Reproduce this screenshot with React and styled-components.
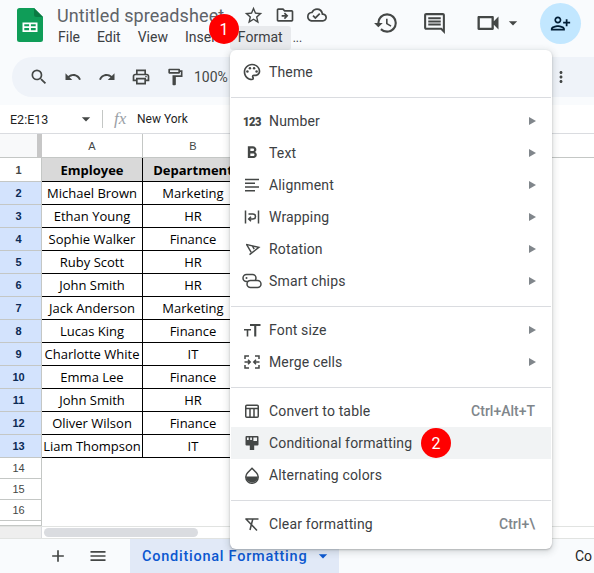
import React from 'react';
import styled, { createGlobalStyle } from 'styled-components';
import {
  MdStarBorder, MdOutlineDriveFileMove, MdOutlineCloudDone, MdHistory, MdOutlineComment,
  MdOutlineVideocam, MdArrowDropDown, MdPersonAddAlt, MdSearch, MdUndo, MdRedo, MdOutlinePrint,
  MdOutlineFormatPaint, MdMoreVert, MdOutlinePalette, MdFormatBold,
  MdAdd, MdMenu,
} from 'react-icons/md';

const GlobalStyle = createGlobalStyle`
  html, body {
    margin: 0;
    padding: 0;
    width: 594px;
    height: 573px;
    overflow: hidden;
    background: #fff;
    font-family: Roboto, "Liberation Sans", sans-serif;
  }
`;

const Page = styled.div`
  position: relative;
  width: 594px;
  height: 573px;
  overflow: hidden;
  display: flex;
  flex-direction: column;
  background: #f9fbfd;
`;

const Header = styled.header`
  display: flex;
  height: 57px;
  flex: none;
  color: #444746;
`;

const LogoSlot = styled.div`
  width: 50px;
  flex: none;
  padding: 8px 0 0 17px;
  box-sizing: border-box;
`;

const TitleColumn = styled.div`
  display: flex;
  flex-direction: column;
`;

const TitleRow = styled.div`
  display: flex;
  align-items: center;
  height: 26px;
  padding-left: 7px;
  padding-top: 2px;
  box-sizing: content-box;
  margin-bottom: -2px;
`;

const DocTitle = styled.div`
  font-size: 18px;
  letter-spacing: 0.1px;
  color: #5f6368;
  width: 180px;
  white-space: nowrap;
`;

const TitleIcon = styled.span`
  display: flex;
  justify-content: center;
  width: 32px;
  color: #444746;
`;

const MenuBar = styled.nav`
  display: flex;
  height: 24px;
  align-items: center;
  font-size: 14px;
  color: #3c4043;
`;

const MenuName = styled.div`
  height: 24px;
  line-height: 22px;
  padding: 0 8px;
  margin-right: 1px;
  border-radius: 3px;
  background: ${p => (p.$active ? '#e8eaed' : 'transparent')};
`;

const MoreDots = styled.div`
  margin-left: 1px;
  font-size: 12px;
  color: #3c4043;
`;

const HeaderActions = styled.div`
  margin-left: auto;
  display: flex;
  align-items: center;
  padding: 2px 13px 13px 0;
`;

const ActionIcon = styled.span`
  display: flex;
  justify-content: center;
  align-items: center;
  width: ${p => p.$w || 49}px;
  margin-left: ${p => p.$gap || 0}px;
  color: #444746;
`;

const Avatar = styled.div`
  width: 41px;
  height: 41px;
  border-radius: 50%;
  background: #c2e7ff;
  color: #001d35;
  display: flex;
  align-items: center;
  justify-content: center;
  margin-left: 16px;
`;

const Toolbar = styled.div`
  display: flex;
  align-items: center;
  height: 40px;
  flex: none;
  margin-left: 12px;
  padding: 0 24px 0 11px;
  gap: 2px;
  border-radius: 20px 0 0 20px;
  background: #eff3f9;
  color: #444746;
`;

const ToolButton = styled.span`
  width: 32px;
  height: 32px;
  display: flex;
  align-items: center;
  justify-content: center;
`;

const Zoom = styled.span`
  font-size: 14px;
  margin-left: 1px;
  color: #444746;
`;

const Kebab = styled.span`
  display: flex;
  margin-left: auto;
`;

const FormulaBar = styled.div`
  display: flex;
  align-items: center;
  height: 29px;
  flex: none;
  margin-top: 8px;
  background: #fff;
  border-bottom: 1px solid #dadce0;
  box-sizing: border-box;
  font-family: Roboto, sans-serif;
  font-size: 12px;
  color: #1f1f1f;
`;

const NameBox = styled.div`
  width: 102px;
  box-sizing: border-box;
  padding-left: 10px;
  display: flex;
  align-items: center;
  justify-content: space-between;
  padding-right: 6px;
  font-size: 12.5px;
`;

const Fx = styled.span`
  border-left: 1px solid #c4c7c5;
  height: 18px;
  line-height: 18px;
  padding-left: 11px;
  width: 22px;
  margin-right: 1px;
  font-family: "Liberation Serif", serif;
  font-style: italic;
  font-size: 17px;
  color: #9aa0a6;
`;

const Sheet = styled.div`
  flex: none;
  height: 392px;
  background: #fff;
  overflow: hidden;
`;

const SheetRow = styled.div`
  display: flex;
  height: ${p => p.$h}px;
`;

const Corner = styled.div`
  width: 42px;
  flex: none;
  box-sizing: border-box;
  background: #f8f9fa;
  border-right: 5px solid #c7c7c7;
  border-bottom: 1px solid #c4c7c5;
`;

const ColHead = styled.div`
  width: ${p => p.$w}px;
  flex: ${p => (p.$fill ? 1 : 'none')};
  box-sizing: border-box;
  display: flex;
  align-items: center;
  justify-content: center;
  font-family: "Liberation Sans", sans-serif;
  font-size: 11px;
  color: #444746;
  border-right: ${p => (p.$fill ? 0 : '1px solid #c4c7c5')};
  border-bottom: 1px solid #c4c7c5;
`;

const RowHead = styled.div`
  width: 42px;
  flex: none;
  box-sizing: border-box;
  display: flex;
  align-items: center;
  justify-content: center;
  padding-right: 4px;
  font-family: "Liberation Sans", sans-serif;
  font-size: 11px;
  font-weight: ${p => (p.$bold ? 700 : 400)};
  color: ${p => (p.$selected ? '#0b2a55' : '#444746')};
  background: ${p => (p.$selected ? '#d3e3fd' : '#fff')};
  border-right: 1px solid #c4c7c5;
  border-bottom: 1px solid #c4c7c5;
`;

const Cell = styled.div`
  width: ${p => p.$w}px;
  flex: none;
  box-sizing: border-box;
  display: flex;
  align-items: center;
  justify-content: center;
  white-space: nowrap;
  overflow: hidden;
  font-family: "Open Sans", sans-serif;
  font-size: 13px;
  font-weight: ${p => (p.$head ? 700 : 400)};
  background: ${p => (p.$head ? '#d9d9d9' : '#fff')};
  color: #000;
  border-right: 1px solid #000;
  border-bottom: 1px solid #000;
`;

const ScrollTrack = styled.div`
  display: flex;
  flex: none;
  height: 13px;
  background: #fff;
  border-top: 1px solid #e1e3e1;
  border-bottom: 1px solid #e1e3e1;
  box-sizing: border-box;
`;

const ScrollGutter = styled.div`
  width: 42px;
  flex: none;
  background: #eeeeee;
  border-right: 1px solid #dadce0;
  box-sizing: border-box;
`;

const ScrollThumb = styled.div`
  width: 154px;
  height: 9px;
  margin: 1px 0 0 2px;
  border-radius: 5px;
  background: #dadce0;
`;

const TabBar = styled.footer`
  display: flex;
  align-items: stretch;
  flex: 1;
  padding-left: 46px;
  color: #444746;
`;

const TabTool = styled.span`
  width: 24px;
  display: flex;
  align-items: center;
  justify-content: center;
  margin-right: 16px;
`;

const ActiveTab = styled.div`
  width: 209px;
  margin-left: 4px;
  box-sizing: border-box;
  padding-left: 12px;
  display: flex;
  align-items: center;
  background: #e1e9f7;
  color: #0b57d0;
  font-size: 14.5px;
  font-weight: 500;
  letter-spacing: 0.75px;
  white-space: nowrap;
`;

const TabCaret = styled.span`
  display: flex;
  margin-left: 6px;
`;

const NextTab = styled.div`
  margin-left: auto;
  width: 19px;
  overflow: hidden;
  display: flex;
  align-items: center;
  font-size: 14px;
  color: #1f1f1f;
`;

const Menu = styled.div`
  position: absolute;
  left: 230px;
  top: 50px;
  width: 322px;
  height: 499px;
  box-sizing: border-box;
  padding-top: 6px;
  background: #fff;
  border-radius: 6px;
  box-shadow: 0 2px 6px 2px rgba(60, 64, 67, 0.15), 0 1px 2px rgba(60, 64, 67, 0.3);
  font-size: 14px;
  letter-spacing: 0.15px;
  color: #3c4043;
`;

const MenuItem = styled.div`
  display: flex;
  align-items: center;
  height: 32px;
  padding: 0 16px 0 11px;
  margin: 0 1px;
  background: ${p => (p.$hover ? '#f1f3f4' : 'transparent')};
`;

const ItemIcon = styled.span`
  width: 20px;
  height: 20px;
  margin-right: 7px;
  flex: none;
  display: flex;
  align-items: center;
  justify-content: center;
  color: #444746;
`;

const NumberGlyph = styled.span`
  font-weight: 900;
  font-size: 13.5px;
  letter-spacing: -0.5px;
  transform: scaleX(0.82);
  color: #444746;
`;

const ItemEnd = styled.span`
  margin-left: auto;
  color: #80868b;
  font-weight: 500;
  letter-spacing: 0;
`;

const Arrow = styled.span`
  margin-left: auto;
  margin-right: -1px;
  width: 0;
  height: 0;
  border-left: 7px solid #80868b;
  border-top: 4px solid transparent;
  border-bottom: 4px solid transparent;
`;

const Divider = styled.div`
  height: 1px;
  margin: 9px 1px 7px;
  background: #dadce0;
`;

const Badge = styled.div`
  position: absolute;
  left: ${p => p.$x}px;
  top: ${p => p.$y}px;
  width: 30px;
  height: 30px;
  border-radius: 50%;
  background: #ff0000;
  color: #fff;
  font-size: 16px;
  display: flex;
  align-items: center;
  justify-content: center;
`;

const SheetsLogo = () => (
  <svg width="26" height="34" viewBox="0 0 26 34">
    <path d="M2.5 0H17l9 9v22.5a2.5 2.5 0 0 1-2.5 2.5h-21A2.5 2.5 0 0 1 0 31.500V2.500A2.500 2.500 0 0 1 2.500 0z" fill="#0f9d58" />
    <path d="M17 0l9 9h-6.500A2.500 2.500 0 0 1 17 6.500z" fill="#0a7a43" />
    <path d="M5.500 14.500h15v9.500h-15zM7.300 16.200v2.100h4.800v-2.100zm6.600 0v2.100h4.800v-2.100zm-6.600 3.800v2.300h4.800V20zm6.600 0v2.300h4.800V20z" fill="#fff" fillRule="evenodd" />
  </svg>
);

const AlignIcon = () => (
  <svg width="18" height="18" viewBox="0 0 18 18" fill="none" stroke="currentColor" strokeWidth="1.400">
    <path d="M2 3.500h14M2 7.300h10M2 11h14M2 14.800h10" />
  </svg>
);

const WrapIcon = () => (
  <svg width="18" height="18" viewBox="0 0 18 18" fill="none" stroke="currentColor" strokeWidth="1.500">
    <path d="M2.500 2.500v13M15.500 2.500v13" />
    <path d="M5.500 6h4.500a2 2 0 0 1 0 5H6M8 8.800L5.700 11 8 13.200" />
  </svg>
);

const RotateIcon = () => (
  <svg width="17" height="17" viewBox="0 0 20 20" fill="none" stroke="currentColor" strokeWidth="1.700">
    <path d="M2.500 4l15 3.500L6.500 16" />
    <path d="M3 4l5.500 9.500M10 6l2 3.500" />
  </svg>
);

const ChipsIcon = () => (
  <svg width="20" height="20" viewBox="0 0 20 20" fill="none" stroke="currentColor" strokeWidth="1.500">
    <rect x="1" y="3.500" width="13" height="7" rx="3.500" />
    <rect x="5" y="9.500" width="14" height="7" rx="3.500" fill="#fff" />
    <circle cx="4.500" cy="7" r="1" fill="currentColor" stroke="none" />
  </svg>
);

const FontSizeIcon = () => (
  <svg width="18" height="18" viewBox="0 0 18 18" fill="currentColor">
    <path d="M7 3h10.500v2H13.300v10.500h-2.100V5H7z" />
    <path d="M1 8h7v1.500H5.300v6H3.700v-6H1z" />
  </svg>
);

const MergeIcon = () => (
  <svg width="18" height="18" viewBox="0 0 18 18" fill="none" stroke="currentColor" strokeWidth="1.500">
    <path d="M2 6V3h4M12 3h4v3M2 12v3h4M12 15h4v-3" />
    <path d="M1.500 9H7M5 6.800L7.200 9 5 11.200M16.500 9H11M13 6.800L10.800 9 13 11.200" />
  </svg>
);

const TableIcon = () => (
  <svg width="16" height="16" viewBox="0 0 16 16" fill="none" stroke="currentColor" strokeWidth="1.500">
    <rect x="1.750" y="2.250" width="12.500" height="12" rx="1" />
    <path d="M1.750 5.500h12.500M6 5.500v8.750M10 5.500v8.750" />
  </svg>
);

const FormatRuleIcon = () => (
  <svg width="18" height="18" viewBox="0 0 18 18" fill="currentColor">
    <path d="M3.500 2h11a1 1 0 0 1 1 1v7.500a1 1 0 0 1-1 1h-3.300V16H6.800v-4.500H3.500a1 1 0 0 1-1-1V3a1 1 0 0 1 1-1z" />
    <path d="M4 3.500h1.700v2.500H4zM7.200 3.500h1.700v2.500H7.200zM10.400 3.500H14v3.400h-3.600z" fill="#f1f3f4" />
  </svg>
);

const DropIcon = () => (
  <svg width="18" height="18" viewBox="0 0 18 18">
    <path d="M9 2.300l4.400 4.400a6.200 6.200 0 1 1-8.800 0z" fill="none" stroke="currentColor" strokeWidth="1.500" />
    <path d="M3 10.500h12a6 6 0 0 1-12 0z" fill="currentColor" />
  </svg>
);

const ClearIcon = () => (
  <svg width="18" height="18" viewBox="0 0 18 18" fill="none" stroke="currentColor" strokeWidth="1.500">
    <path d="M3.500 4h12M9.800 4L7 15M2.500 3.500l11.500 12" />
  </svg>
);

const rows = [
  ['Michael Brown', 'Marketing'],
  ['Ethan Young', 'HR'],
  ['Sophie Walker', 'Finance'],
  ['Ruby Scott', 'HR'],
  ['John Smith', 'HR'],
  ['Jack Anderson', 'Marketing'],
  ['Lucas King', 'Finance'],
  ['Charlotte White', 'IT'],
  ['Emma Lee', 'Finance'],
  ['John Smith', 'HR'],
  ['Oliver Wilson', 'Finance'],
  ['Liam Thompson', 'IT'],
];

const Item = ({ icon, label, arrow, end, hover }) => (
  <MenuItem $hover={hover}>
    <ItemIcon>{icon}</ItemIcon>
    {label}
    {arrow && <Arrow />}
    {end && <ItemEnd>{end}</ItemEnd>}
  </MenuItem>
);

export default function App() {
  return (
    <Page>
      <GlobalStyle />
      <Header>
        <LogoSlot><SheetsLogo /></LogoSlot>
        <TitleColumn>
          <TitleRow>
            <DocTitle>Untitled spreadsheet</DocTitle>
            <TitleIcon><MdStarBorder size={21} /></TitleIcon>
            <TitleIcon><MdOutlineDriveFileMove size={20} /></TitleIcon>
            <TitleIcon><MdOutlineCloudDone size={20} /></TitleIcon>
          </TitleRow>
          <MenuBar>
            <MenuName>File</MenuName>
            <MenuName>Edit</MenuName>
            <MenuName>View</MenuName>
            <MenuName>Insert</MenuName>
            <MenuName $active>Format</MenuName>
            <MoreDots>...</MoreDots>
          </MenuBar>
        </TitleColumn>
        <HeaderActions>
          <ActionIcon><MdHistory size={26} /></ActionIcon>
          <ActionIcon><MdOutlineComment size={25} /></ActionIcon>
          <ActionIcon $w={28} $gap={15}><MdOutlineVideocam size={30} /></ActionIcon>
          <ActionIcon $w={22}><MdArrowDropDown size={20} /></ActionIcon>
          <Avatar><MdPersonAddAlt size={21} /></Avatar>
        </HeaderActions>
      </Header>

      <Toolbar>
        <ToolButton><MdSearch size={20} /></ToolButton>
        <ToolButton><MdUndo size={18} /></ToolButton>
        <ToolButton><MdRedo size={18} /></ToolButton>
        <ToolButton><MdOutlinePrint size={20} /></ToolButton>
        <ToolButton><MdOutlineFormatPaint size={20} /></ToolButton>
        <Zoom>100%</Zoom>
        <Kebab><MdMoreVert size={18} /></Kebab>
      </Toolbar>

      <FormulaBar>
        <NameBox>E2:E13<MdArrowDropDown size={20} color="#444746" /></NameBox>
        <Fx>fx</Fx>
        New York
      </FormulaBar>

      <Sheet>
        <SheetRow $h={24}>
          <Corner />
          <ColHead $w={101}>A</ColHead>
          <ColHead $w={101}>B</ColHead>
          <ColHead $fill />
        </SheetRow>
        <SheetRow $h={24}>
          <RowHead $bold>1</RowHead>
          <Cell $w={101} $head>Employee</Cell>
          <Cell $w={101} $head>Department</Cell>
        </SheetRow>
        {rows.map((row, i) => (
          <SheetRow $h={23} key={i}>
            <RowHead $selected $bold>{i + 2}</RowHead>
            <Cell $w={101}>{row[0]}</Cell>
            <Cell $w={101}>{row[1]}</Cell>
          </SheetRow>
        ))}
        {[14, 15, 16].map(n => (
          <SheetRow $h={21} key={n}>
            <RowHead>{n}</RowHead>
          </SheetRow>
        ))}
        <SheetRow $h={5}>
          <RowHead />
        </SheetRow>
      </Sheet>

      <ScrollTrack>
        <ScrollGutter />
        <ScrollThumb />
      </ScrollTrack>

      <TabBar>
        <TabTool><MdAdd size={20} /></TabTool>
        <TabTool><MdMenu size={20} /></TabTool>
        <ActiveTab>
          Conditional Formatting
          <TabCaret><MdArrowDropDown size={20} /></TabCaret>
        </ActiveTab>
        <NextTab>Co</NextTab>
      </TabBar>

      <Menu>
        <Item icon={<MdOutlinePalette size={20} />} label="Theme" />
        <Divider />
        <Item icon={<NumberGlyph>123</NumberGlyph>} label="Number" arrow />
        <Item icon={<MdFormatBold size={24} />} label="Text" arrow />
        <Item icon={<AlignIcon />} label="Alignment" arrow />
        <Item icon={<WrapIcon />} label="Wrapping" arrow />
        <Item icon={<RotateIcon />} label="Rotation" arrow />
        <Item icon={<ChipsIcon />} label="Smart chips" arrow />
        <Divider />
        <Item icon={<FontSizeIcon />} label="Font size" arrow />
        <Item icon={<MergeIcon />} label="Merge cells" arrow />
        <Divider />
        <Item icon={<TableIcon />} label="Convert to table" end="Ctrl+Alt+T" />
        <Item icon={<FormatRuleIcon />} label="Conditional formatting" hover />
        <Item icon={<DropIcon />} label="Alternating colors" />
        <Divider />
        <Item icon={<ClearIcon />} label="Clear formatting" end="Ctrl+\" />
      </Menu>

      <Badge $x={209} $y={14}>1</Badge>
      <Badge $x={421} $y={428}>2</Badge>
    </Page>
  );
}
